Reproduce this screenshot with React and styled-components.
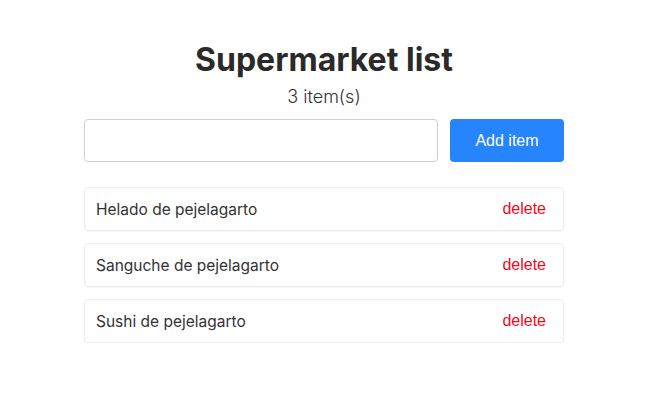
import React, { useState } from "react";
import styled, { createGlobalStyle } from "styled-components";

const Global = createGlobalStyle`
  html, body { margin: 0; padding: 0; background: #fff; }
  body { padding-right: 5px; font-family: Inter, "Liberation Sans", sans-serif; color: #333; }
`;

const Container = styled.div`
  width: 480px;
  margin: 0 auto;
  padding-top: 40px;
  display: flex;
  flex-direction: column;
`;

const Title = styled.h1`
  margin: 0;
  text-align: center;
  font-size: 32px;
  font-weight: 700;
  color: #2a2a2a;
  line-height: 40px;
`;

const Count = styled.div`
  text-align: center;
  font-size: 18px;
  font-weight: 300;
  color: #333;
  line-height: 24px;
  margin-top: 5px;
`;

const Form = styled.form`
  display: flex;
  gap: 12px;
  margin-top: 10px;
`;

const Input = styled.input`
  flex: 1;
  height: 43px;
  box-sizing: border-box;
  border: 1px solid #cfcfcf;
  border-radius: 4px;
  padding: 0 10px;
  font-size: 16px;
  outline: none;
`;

const Button = styled.button`
  width: 114px;
  height: 43px;
  border: none;
  border-radius: 4px;
  background: #2684fc;
  color: #fff;
  font-family: "Liberation Sans", Arial, sans-serif;
  font-size: 16px;
  cursor: pointer;
`;

const List = styled.ul`
  list-style: none;
  margin: 25px 0 0;
  padding: 0;
  display: flex;
  flex-direction: column;
  gap: 12px;
`;

const Item = styled.li`
  height: 44px;
  box-sizing: border-box;
  display: flex;
  align-items: center;
  justify-content: space-between;
  padding: 0 17px 0 11px;
  border: 1px solid #ececec;
  border-radius: 4px;
  box-shadow: 0 1px 2px rgba(0, 0, 0, 0.04);
  font-size: 15.5px;
  color: #333;
`;

const Delete = styled.button`
  border: none;
  background: none;
  padding: 0;
  color: #f5071f;
  font-family: "Liberation Sans", Arial, sans-serif;
  font-size: 16px;
  cursor: pointer;
`;

export default function App() {
  const [items, setItems] = useState([
    "Helado de pejelagarto",
    "Sanguche de pejelagarto",
    "Sushi de pejelagarto",
  ]);
  const [value, setValue] = useState("");
  return (
    <>
      <Global />
      <Container>
        <Title>Supermarket list</Title>
        <Count>{items.length} item(s)</Count>
        <Form
          onSubmit={(e) => {
            e.preventDefault();
            if (value.trim()) {
              setItems([...items, value.trim()]);
              setValue("");
            }
          }}
        >
          <Input value={value} onChange={(e) => setValue(e.target.value)} />
          <Button type="submit">Add item</Button>
        </Form>
        <List>
          {items.map((it, i) => (
            <Item key={i}>
              <span>{it}</span>
              <Delete onClick={() => setItems(items.filter((_, j) => j !== i))}>delete</Delete>
            </Item>
          ))}
        </List>
      </Container>
    </>
  );
}
